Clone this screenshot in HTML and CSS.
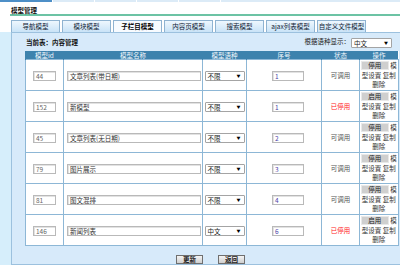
FILE: index.html
```html
<!DOCTYPE html>
<html lang="zh-CN">
<head>
  <meta charset="UTF-8" />
  <title>模型管理</title>
  <link rel="stylesheet" href="styles.css">
</head>
<body>
  <div class="topline"><span class="cur"></span><span></span><span></span><span></span><span></span></div>
  <div class="main">
    <h2 class="title">模型管理</h2>
    <ul class="tabs">
      <li>导航模型</li>
      <li>模块模型</li>
      <li class="on">子栏目模型</li>
      <li>内容页模型</li>
      <li>搜索模型</li>
      <li>ajax列表模型</li>
      <li>自定义文件模型</li>
    </ul>
  </div>
  <div class="area">
    <div class="panel">
      <div class="bar">
        <span class="cur-table">当前表：内容管理</span>
        <span class="lang">根据语种显示：<span class="sel">中文</span></span>
      </div>

      <table class="list">
        <tr>
          <th class="c-id">模型id</th>
          <th class="c-name">模型名称</th>
          <th class="c-lang">模型语种</th>
          <th class="c-ord">序号</th>
          <th class="c-st">状态</th>
          <th class="c-op">操作</th>
        </tr>
        <tr>
          <td><span class="ipt id">44</span></td>
          <td><span class="ipt name">文章列表(带日期)</span></td>
          <td><span class="sel">不限</span></td>
          <td><span class="ipt ord">1</span></td>
          <td class="ok">可调用</td>
          <td class="op"><span class="btn">停用</span> <a>模型设置</a> <a>复制</a> <a>删除</a></td>
        </tr>
        <tr>
          <td><span class="ipt id">152</span></td>
          <td><span class="ipt name">新模型</span></td>
          <td><span class="sel">不限</span></td>
          <td><span class="ipt ord">1</span></td>
          <td class="off">已停用</td>
          <td class="op"><span class="btn">启用</span> <a>模型设置</a> <a>复制</a> <a>删除</a></td>
        </tr>
        <tr>
          <td><span class="ipt id">45</span></td>
          <td><span class="ipt name">文章列表(无日期)</span></td>
          <td><span class="sel">不限</span></td>
          <td><span class="ipt ord">2</span></td>
          <td class="ok">可调用</td>
          <td class="op"><span class="btn">停用</span> <a>模型设置</a> <a>复制</a> <a>删除</a></td>
        </tr>
        <tr>
          <td><span class="ipt id">79</span></td>
          <td><span class="ipt name">图片展示</span></td>
          <td><span class="sel">不限</span></td>
          <td><span class="ipt ord">3</span></td>
          <td class="ok">可调用</td>
          <td class="op"><span class="btn">停用</span> <a>模型设置</a> <a>复制</a> <a>删除</a></td>
        </tr>
        <tr>
          <td><span class="ipt id">81</span></td>
          <td><span class="ipt name">图文混排</span></td>
          <td><span class="sel">不限</span></td>
          <td><span class="ipt ord">4</span></td>
          <td class="ok">可调用</td>
          <td class="op"><span class="btn">停用</span> <a>模型设置</a> <a>复制</a> <a>删除</a></td>
        </tr>
        <tr>
          <td><span class="ipt id">146</span></td>
          <td><span class="ipt name">新闻列表</span></td>
          <td><span class="sel">中文</span></td>
          <td><span class="ipt ord">6</span></td>
          <td class="off">已停用</td>
          <td class="op"><span class="btn">启用</span> <a>模型设置</a> <a>复制</a> <a>删除</a></td>
        </tr>
      </table>

      <div class="btns">
        <span class="gbtn">更新</span>
        <span class="gbtn">返回</span>
      </div>
    </div>
  </div>
</body>
</html>
```

FILE: styles.css
```css
body {
  margin: 0;
  font-family: "Noto Sans CJK SC", "Liberation Sans", sans-serif;
  font-size: 6.5px;
  color: #222;
  background: #fff;
  overflow: hidden;
}

.topline {
  display: flex;
  height: 2px;
  background: #dcebf7;
}

.topline span {
  width: 41px;
  border-right: 1px solid #fff;
}

.topline .cur {
  width: 52px;
  background: #4d8fc7;
}

.main {
  padding: 0 0 0 10px;
}

.title {
  margin: 0;
  padding: 5px 0 0 1px;
  height: 7px;
  line-height: 7px;
  font-size: 6.5px;
  font-weight: bold;
  color: #111;
  border-bottom: 2px solid #6cc3a4;
}

.tabs {
  list-style: none;
  margin: 4px 0 0 1px;
  padding: 0;
  display: flex;
  gap: 2px;
}

.tabs li {
  width: 47px;
  height: 11px;
  line-height: 11px;
  text-align: center;
  border: 1px solid #8fb3d1;
  border-bottom: none;
  background: linear-gradient(#eef7fe, #c9e3f7);
  color: #123;
}

.tabs li.on {
  background: #f7fbff;
  font-weight: bold;
  color: #000;
}

.area {
  background: #d6eefb;
  padding-left: 11px;
}

.panel {
  background: #d7eafa;
  border-left: 1px solid #9cc1de;
  border-top: 1px solid #9cc1de;
  border-bottom: 1px solid #9cc1de;
  height: 231px;
  padding: 0 8px 0 13px;
}

.bar {
  display: flex;
  justify-content: space-between;
  align-items: center;
  height: 18px;
  padding-left: 1px;
}

.cur-table {
  font-weight: bold;
  color: #111;
}

.lang .sel {
  background: #fff;
  width: 37px;
  margin-left: 1px;
}

.sel {
  position: relative;
  display: inline-block;
  width: 36px;
  height: 8px;
  line-height: 8px;
  border: 1px solid #a4a4a4;
  border-radius: 1px;
  padding-left: 2px;
  text-align: left;
  background: #fff;
  color: #222;
  vertical-align: middle;
}

.sel::after {
  content: "▼";
  position: absolute;
  right: 3px;
  top: 0;
  font-size: 4px;
  color: #000;
}

.list {
  width: 367px;
  border-collapse: collapse;
  background: #fff;
  table-layout: fixed;
}

.list th {
  height: 8px;
  line-height: 8px;
  padding: 0;
  background: #3d82ad;
  color: #f2f8fc;
  font-weight: normal;
  border-left: 1px solid #3d82ad;
}

.list td {
  height: 30px;
  padding: 0;
  text-align: center;
  border: 1px solid #8db7d6;
}

.c-id { width: 37px; }
.c-name { width: 138px; }
.c-lang { width: 43px; }
.c-ord { width: 74px; }
.c-st { width: 37px; }
.c-op { width: 38px; }

.ipt {
  display: inline-block;
  height: 8px;
  line-height: 8px;
  border: 1px solid #b9b9b9;
  box-shadow: inset 1px 1px 0 #e2e2e2;
  padding-left: 2px;
  text-align: left;
  vertical-align: middle;
  background: #fff;
}

.ipt.id {
  width: 19px;
  color: #666;
}

.ipt.name {
  width: 130px;
  color: #333;
  margin-left: 2px;
}

.ipt.ord {
  width: 28px;
  color: #4a3fa8;
  margin-left: 8px;
}

.ok {
  color: #555;
}

.off {
  color: #f22;
}

.list td.op {
  line-height: 9px;
  color: #333;
}

.op a {
  color: #333;
}

.btn {
  display: inline-block;
  width: 26px;
  height: 7px;
  line-height: 7px;
  background: #cfcfcf;
  border: 1px solid #e8e8e8;
  color: #222;
  vertical-align: top;
  margin-bottom: 1px;
}

.btns {
  display: flex;
  justify-content: center;
  gap: 15px;
  margin-top: 9px;
  padding-left: 4px;
}

.gbtn {
  display: inline-block;
  width: 25px;
  height: 7px;
  line-height: 7px;
  text-align: center;
  font-weight: bold;
  background: linear-gradient(#f4f4f4, #cfcfcf);
  border: 1px solid #6f6f6f;
  color: #222;
}
```
